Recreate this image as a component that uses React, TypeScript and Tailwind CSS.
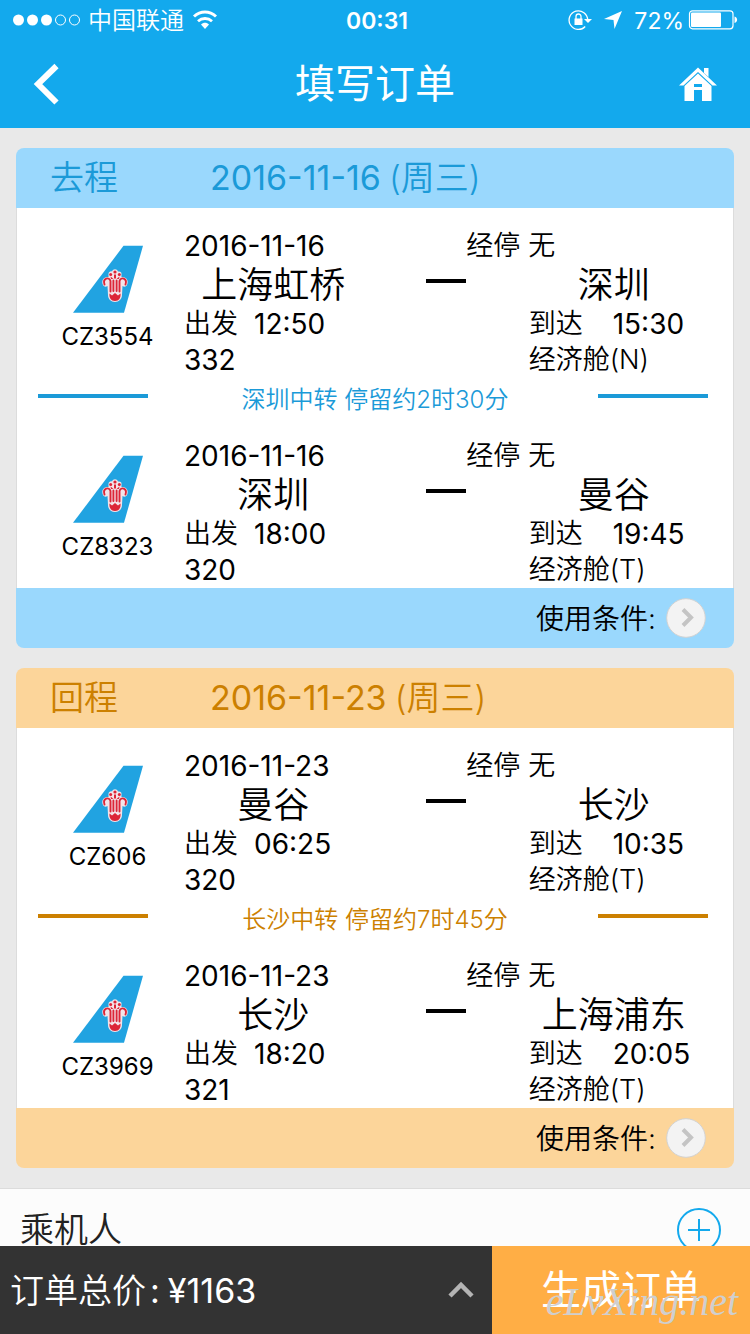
import React from 'react';

type Leg = {
  code: string;
  date: string;
  from: string;
  to: string;
  depart: string;
  arrive: string;
  plane: string;
  cabin: string;
};

type Trip = {
  label: string;
  date: string;
  transfer: string;
  legs: [Leg, Leg];
  band: string;
  ink: string;
  rule: string;
};

const trips: Trip[] = [
  {
    label: '去程',
    date: '2016-11-16',
    transfer: '深圳中转 停留约2时30分',
    band: 'bg-[#9ad8fd]',
    ink: 'text-[#1b9ad8]',
    rule: 'bg-[#1b9ad8]',
    legs: [
      { code: 'CZ3554', date: '2016-11-16', from: '上海虹桥', to: '深圳', depart: '12:50', arrive: '15:30', plane: '332', cabin: '经济舱(N)' },
      { code: 'CZ8323', date: '2016-11-16', from: '深圳', to: '曼谷', depart: '18:00', arrive: '19:45', plane: '320', cabin: '经济舱(T)' },
    ],
  },
  {
    label: '回程',
    date: '2016-11-23',
    transfer: '长沙中转 停留约7时45分',
    band: 'bg-[#fcd59a]',
    ink: 'text-[#cc8000]',
    rule: 'bg-[#cc8000]',
    legs: [
      { code: 'CZ606', date: '2016-11-23', from: '曼谷', to: '长沙', depart: '06:25', arrive: '10:35', plane: '320', cabin: '经济舱(T)' },
      { code: 'CZ3969', date: '2016-11-23', from: '长沙', to: '上海浦东', depart: '18:20', arrive: '20:05', plane: '321', cabin: '经济舱(T)' },
    ],
  },
];

function StatusBar() {
  return (
    <div className="relative flex h-10 items-center justify-between px-3 text-2xl leading-8">
      <div className="flex items-center">
        <svg width="70" height="14" viewBox="0 0 70 14" aria-hidden="true">
          <circle cx="6.5" cy="7" r="5.5" fill="#fff" />
          <circle cx="20.5" cy="7" r="5.5" fill="#fff" />
          <circle cx="34.5" cy="7" r="5.5" fill="#fff" />
          <circle cx="48.5" cy="7" r="5" fill="none" stroke="#fff" />
          <circle cx="62.5" cy="7" r="5" fill="none" stroke="#fff" />
        </svg>
        <span className="ml-[6px] pt-[2px] font-[350]">中国联通</span>
        <svg className="ml-2" width="26" height="20" viewBox="0 0 26 20" aria-hidden="true">
          <path d="M2 6.5C8.5.6 17.5.6 24 6.5" fill="none" stroke="#fff" strokeWidth="3" />
          <path d="M6 11.2C10 7.6 16 7.6 20 11.2" fill="none" stroke="#fff" strokeWidth="2.8" />
          <path d="M9 14.5C11.3 12.3 14.7 12.3 17 14.5L13 19Z" fill="#fff" />
        </svg>
      </div>
      <span className="absolute inset-x-0 pt-[2px] pl-1 text-center text-[23px] font-semibold">00:31</span>
      <div className="flex items-center">
        <svg width="24" height="22" viewBox="0 0 24 22" aria-hidden="true">
          <path d="M19.7 11A9.3 9.3 0 1 0 17.2 17.5" fill="none" stroke="#fff" strokeWidth="1.3" />
          <path d="M16 10H24L20 14Z" fill="#fff" />
          <rect x="6.5" y="9.5" width="8" height="6.5" fill="#fff" />
          <path d="M8 10V7.5a2.500 2.500 0 0 1 5 0V10" fill="none" stroke="#fff" strokeWidth="1.3" />
        </svg>
        <svg className="ml-3" width="18" height="18" viewBox="0 0 18 18" aria-hidden="true">
          <path d="M18 0L10.5 18L9.5 9L0 8Z" fill="#fff" />
        </svg>
        <span className="ml-3 pt-[2px] text-[23px]">72%</span>
        <svg className="ml-1" width="50" height="20" viewBox="0 0 50 20" aria-hidden="true">
          <rect x="1.5" y=".8" width="43.5" height="18" rx="3" fill="none" stroke="#fff" strokeWidth="1.2" />
          <rect x="3" y="2.5" width="30" height="14.5" rx="1" fill="#fff" />
          <path d="M46.5 6.500C50 7.500 50 12 46.500 13Z" fill="#fff" />
        </svg>
      </div>
    </div>
  );
}

function TitleBar() {
  return (
    <div className="relative flex h-[88px] items-center justify-between px-8">
      <button type="button" aria-label="返回">
        <svg width="28" height="42" viewBox="0 0 28 42" aria-hidden="true">
          <path d="M24.500 3L6 21L24.500 39.500" fill="none" stroke="#fff" strokeWidth="6" />
        </svg>
      </button>
      <h1 className="pointer-events-none absolute inset-x-0 text-center text-[40px] leading-[48px] font-normal">填写订单</h1>
      <button type="button" aria-label="首页">
        <svg width="40" height="36" viewBox="0 0 40 36" aria-hidden="true">
          <path d="M1 19.500L20 1.500L39 19.500H34.500L20 6L5.500 19.500Z" fill="#fff" />
          <path d="M26 2H30.500V11L26 7Z" fill="#fff" />
          <path d="M6.500 20L20 7.500L33.500 20V35H24V24H16V35H6.500Z" fill="#fff" />
          <path d="M16 18h8v3h-8z" fill="#13a9ed" />
        </svg>
      </button>
    </div>
  );
}

function TailLogo() {
  return (
    <svg width="72" height="70" viewBox="0 0 72 70" aria-hidden="true">
      <path d="M51.500 .8H71L52 67.800H1Z" fill="#21a3e1" />
      <path
        d="M36.500 29c0-2 2-3 3.500-2.500 1-3 5-3 6 0 2-.5 4 .5 3.500 3v2.500c5-.5 7.500 3.500 5.500 8-1 2-3 2-4.500 1l-.5 9c0 4-3 7-7 7s-7-3-7-7l-.5-9c-1.500 1-3.500 1-4.500-1-2-4.500.5-8.500 5.500-8z"
        fill="#f3e3e8"
      />
      <g fill="#dc2638">
        <circle cx="43" cy="27" r="1.600" />
        <circle cx="38.700" cy="29.500" r="1.500" />
        <circle cx="47.300" cy="29.500" r="1.500" />
        <path d="M42 29.500h2v4h-2zM38.500 31.500l3 2.500h-2.500zM47.500 31.500l-3 2.500h2.500z" />
        <path d="M37.500 48.500l2.500 2 3-2.500 3 2.500 2.500-2c.5 4.500-1.500 7.500-5.500 7.500s-6-3-5.500-7.500z" />
      </g>
      <g fill="none" stroke="#dc2638" strokeWidth="1.900" strokeLinecap="round">
        <path d="M32.500 39.500c-2.200-6.500 5-8 6-3.500v10.500M53.500 39.500c2.200-6.500-5-8-6-3.500v10.500" />
        <path d="M41.400 35.500v10.500M44.600 35.500v10.500" />
      </g>
    </svg>
  );
}

function LegRow({ leg }: { leg: Leg }) {
  return (
    <div className="flex h-[170px] pr-[34px]">
      <div className="flex w-[167px] shrink-0 flex-col items-center pt-[37px] pl-[14px]">
        <TailLogo />
        <span className="mt-2 text-2xl leading-7">{leg.code}</span>
      </div>
      <div className="grid flex-1 grid-cols-[178fr_166fr_170fr] grid-rows-[36px_42px_36px_36px] items-center pt-5 text-[27px] leading-9 font-[350] whitespace-nowrap">
        <span className="text-[28px] font-normal">{leg.date}</span>
        <span className="col-span-2 flex gap-2 pl-[104px]">
          <span>经停</span>
          <span>无</span>
        </span>

        <span className="text-center text-4xl leading-10">{leg.from}</span>
        <span className="mx-auto mb-2 h-1 w-10 bg-black" />
        <span className="text-center text-4xl leading-10">{leg.to}</span>

        <span className="col-span-2 flex gap-4">
          <span>出发</span>
          <time className="text-[28px] font-normal">{leg.depart}</time>
        </span>
        <span className="flex gap-[30px]">
          <span>到达</span>
          <time className="text-[28px] font-normal">{leg.arrive}</time>
        </span>

        <span className="col-span-2 text-[28px] font-normal">{leg.plane}</span>
        <span>{leg.cabin}</span>
      </div>
    </div>
  );
}

function TripCard({ trip }: { trip: Trip }) {
  return (
    <section className="overflow-hidden rounded-lg">
      <h2 className={`flex h-[60px] items-center pl-[34px] text-[34px] leading-10 ${trip.band} ${trip.ink}`}>
        <span className="w-40 font-[350]">{trip.label}</span>
        <span className="flex gap-2">
          <span>{trip.date}</span>
          <span className="font-[350]">(周三)</span>
        </span>
      </h2>
      <div className="border-x border-[#dcdcdc] bg-white">
        <LegRow leg={trip.legs[0]} />
        <div className="flex h-10 items-center justify-between pr-[25px] pl-[21px]">
          <span className={`mb-1 h-1 w-[110px] ${trip.rule}`} />
          <span className={`pt-1 pl-1 text-2xl font-[350] ${trip.ink}`}>{trip.transfer}</span>
          <span className={`mb-1 h-1 w-[110px] ${trip.rule}`} />
        </div>
        <LegRow leg={trip.legs[1]} />
      </div>
      <button type="button" className={`flex h-[60px] w-full items-center justify-end gap-[10px] pr-7 text-[28px] font-[350] ${trip.band}`}>
        <span className="pt-[2px]">使用条件:</span>
        <svg width="40" height="40" viewBox="0 0 40 40" aria-hidden="true">
          <circle cx="20" cy="20" r="19.300" fill="#f3f3f3" stroke="#d2d2d2" />
          <path d="M17 11.500L25 19.500L17 27.500" fill="none" stroke="#c4c4c4" strokeWidth="4" />
        </svg>
      </button>
    </section>
  );
}

export default function App() {
  return (
    <div className="flex h-screen flex-col bg-[#e9e9e9] font-['Inter','Noto_Sans_CJK_SC',sans-serif] text-black">
      <header className="shrink-0 bg-[#13a9ed] text-white">
        <StatusBar />
        <TitleBar />
      </header>

      <main className="min-h-0 flex-1 overflow-y-auto [scrollbar-width:none]">
        <div className="flex flex-col gap-5 px-4 py-5">
          {trips.map((trip) => (
            <TripCard key={trip.label} trip={trip} />
          ))}
        </div>
        <section className="flex h-[84px] items-center justify-between border-y border-[#dcdcdc] bg-[#fcfcfc] pr-7 pl-5 text-[#222]">
          <h2 className="text-[34px] leading-10 font-[350]">乘机人</h2>
          <button type="button" aria-label="添加乘机人">
            <svg width="46" height="46" viewBox="0 0 46 46" fill="none" stroke="#13a9ed" strokeWidth="2" aria-hidden="true">
              <circle cx="23" cy="23" r="21" />
              <path d="M12 23H34M23 12V34" />
            </svg>
          </button>
        </section>
      </main>

      <footer className="flex h-[88px] shrink-0 text-white">
        <button type="button" className="flex w-[65.6%] items-center justify-between bg-[#333] pr-4 pl-[10px]">
          <span className="flex items-center text-[34px]">
            <span className="font-[350]">订单总价</span>
            <span className="mr-2 ml-1">:</span>
            <span>¥1163</span>
          </span>
          <svg width="30" height="20" viewBox="0 0 30 20" aria-hidden="true">
            <path d="M4 16L15 5L26 16" fill="none" stroke="#b4b4b4" strokeWidth="4.500" />
          </svg>
        </button>
        <button type="button" className="relative flex-1 bg-[#ffae45] text-[40px] font-normal">
          生成订单
          <span className="absolute right-3 bottom-2 font-['Liberation_Serif',serif] text-[40px] leading-[48px] text-[#cfcfcf] italic">
            eLvXing.net
          </span>
        </button>
      </footer>
    </div>
  );
}
